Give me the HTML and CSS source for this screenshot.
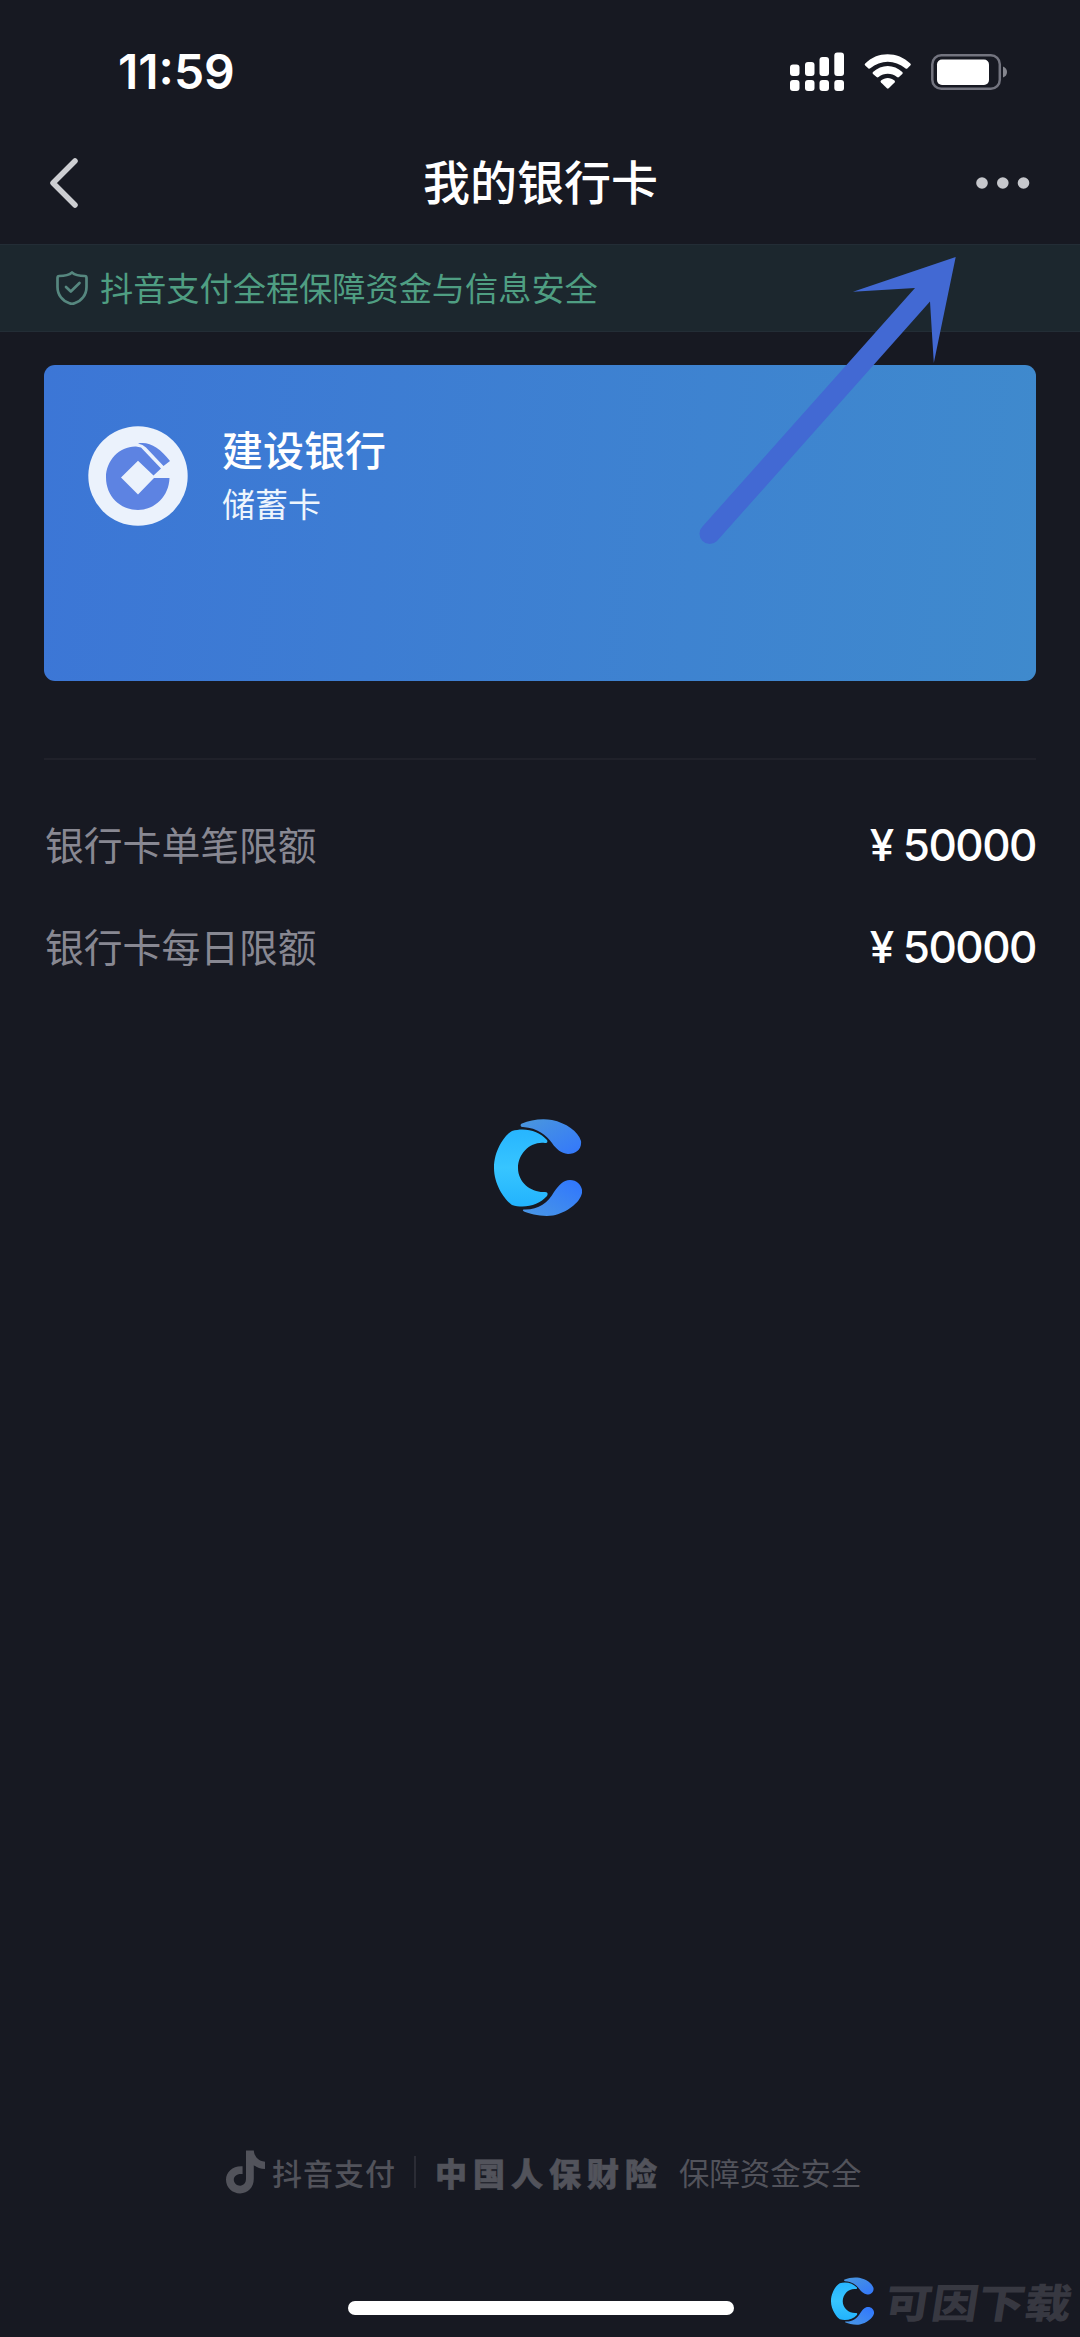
FILE: index.html
```html
<!DOCTYPE html>
<html lang="zh-CN">
<head>
<meta charset="utf-8">
<title>我的银行卡</title>
<link rel="stylesheet" href="styles.css">
</head>
<body>
<svg width="0" height="0" class="defs" aria-hidden="true">
  <defs>
    <linearGradient id="cyan" x1="0" y1="0" x2="0" y2="1"><stop offset="0" stop-color="#27b5ff"/><stop offset=".5" stop-color="#37c5ff"/><stop offset="1" stop-color="#22b3fd"/></linearGradient>
    <linearGradient id="blue-top" x1="0" y1="0" x2="1" y2="1"><stop offset="0" stop-color="#4b98dc"/><stop offset="1" stop-color="#3377fc"/></linearGradient>
    <linearGradient id="blue-bottom" x1="0" y1="1" x2="1" y2="0"><stop offset="0" stop-color="#4a98e4"/><stop offset="1" stop-color="#2f75ff"/></linearGradient>
    <symbol id="brand" viewBox="0 0 88 97">
      <path fill="url(#blue-top)" d="M28 4.500C36 1 48-1 58 1C72 4 84 12 87 22C88 30 82 35 74 35C67 34 62 30 58 24C52 16 44 9 29 8C26 8 26 5 28 4.500Z"/>
      <path fill="url(#blue-bottom)" d="M30 90.500C44 91 54 84 60 73C65 66 69 61 76 61C84 61 89 68 88 74C86 84 72 94 59 96.500C48 98 36 95 30 92.500C28 91.500 29 90.500 30 90.500Z"/>
      <path fill="url(#cyan)" d="M18 12C31 8 45 12 53 21C54 23 53 24 51 24C37 22 24 34 24 49C24 64 38 74 51 73C54 73 54 75 53 77C45 86 31 90 18 86C12 82 0 67 0 49C0 30 12 15 18 12Z"/>
    </symbol>
  </defs>
</svg>
<div class="screen">
  <div class="status">
    <span class="clock">11:59</span>
    <svg class="status-icons" viewBox="0 0 218 40" fill="#fff">
      <rect x="0" y="12.500" width="9.500" height="11.500" rx="3"/><rect x="15" y="10" width="9.500" height="14" rx="3"/><rect x="29.500" y="5" width="9.500" height="19" rx="3"/><rect x="44.300" y=".5" width="9.700" height="23.500" rx="3"/>
      <rect x="0" y="28" width="9.500" height="11" rx="3"/><rect x="15" y="28" width="9.500" height="11" rx="3"/><rect x="29.500" y="28" width="9.500" height="11" rx="3"/><rect x="44.300" y="28" width="9.700" height="11" rx="3"/>
      <path d="M75.200 11.500C87-1 108-1 120.300 11.500Q121.300 12.500 120.300 13.500L117.300 16.500Q116.300 17.200 115.300 16.300C105 7.500 90.500 7.500 80.300 16.300Q79.200 17.200 78.200 16.200L75.200 13.500Q74.200 12.500 75.200 11.500Z"/>
      <path d="M83 20C91.500 12 104 12 112.300 20Q113.300 21 112.300 22L109 25Q108 25.800 107 25C101.500 20.700 94 20.700 88.600 25Q87.500 25.800 86.600 25L83 22Q82 21 83 20Z"/>
      <path d="M91 28.500C95 25 100.500 25 104.500 28.500Q105.500 29.500 104.600 30.500L98.700 36.300Q97.800 37 96.900 36.300L91 30.500Q90 29.500 91 28.500Z"/>
      <rect x="142.300" y="3.200" width="67.500" height="33.600" rx="9" fill="none" stroke="#73747f" stroke-width="2.500"/>
      <rect x="147" y="7.500" width="52" height="25.500" rx="5"/>
      <path d="M213 14.500Q217 16 217 20T213 25.500Z" fill="#85868e"/>
    </svg>
  </div>
  <header class="nav">
    <svg class="back" viewBox="0 0 30 52"><path d="M25 4L3 26L25 48" fill="none" stroke="#cdced2" stroke-width="5.500" stroke-linecap="round" stroke-linejoin="round"/></svg>
    <h1 class="title">我的银行卡</h1>
    <svg class="more" viewBox="0 0 54 12" fill="#c6c7cc"><circle cx="6" cy="6" r="5.800"/><circle cx="26.800" cy="6" r="5.800"/><circle cx="47.500" cy="6" r="5.800"/></svg>
  </header>
  <div class="notice">
    <svg class="shield" viewBox="0 0 32 34" fill="none" stroke="#56877f" stroke-width="2.700" stroke-linecap="round" stroke-linejoin="round"><path d="M16 1.500C12.500 4.500 7 5 3.200 5Q1.500 5 1.500 7V16C1.500 24 6.500 30 13.500 32.300Q16 33.300 18.500 32.300C25.500 30 30.500 24 30.500 16V7Q30.500 5 28.800 5C25 5 19.500 4.500 16 1.500Z"/><path d="M10 16L14.800 20.500L23.500 12"/></svg>
    <span class="notice-text">抖音支付全程保障资金与信息安全</span>
  </div>
  <section class="card">
    <svg class="bank-logo" viewBox="0 0 100 100">
      <circle cx="50" cy="50" r="49.700" fill="#ebf2fc"/>
      <path fill="#5d83e2" d="M18 51.500C18 34 32 20 48 20.500L53 21.500L73 42.500L65.500 49.500L50 34.700L33 51.500L50 68.500L66 52H81.500C81 70 67 84 50 84C32 84 18 70 18 51.500Z"/>
      <path fill="#5d83e2" d="M50 17.500C61 15 72 22 82 35L75.500 40L58 21.500Q55 18.500 50 17.500Z"/>
    </svg>
    <div class="bank">
      <div class="bank-name">建设银行</div>
      <div class="bank-type">储蓄卡</div>
    </div>
  </section>
  <section class="limits">
    <div class="limit"><span class="label">银行卡单笔限额</span><span class="amount"><span class="yen">¥</span>50000</span></div>
    <div class="limit"><span class="label">银行卡每日限额</span><span class="amount"><span class="yen">¥</span>50000</span></div>
  </section>
  <svg class="brand-center"><use href="#brand"/></svg>
  <footer class="footer">
    <svg class="note" viewBox="0 0 40 44"><path fill="#52535b" d="M20.500 0H28.500C29 6 33 11 40 11.500V19C35.500 19 31.500 17.500 28.500 15V29C28.500 38 22.500 44 14.500 44S0 38 0 30S6.500 16 15.500 16H17V24H15C11 24 8 26.500 8 30S11 36 14.500 36S20.500 33.500 20.500 29Z"/></svg>
    <span class="pay">抖音支付</span>
    <span class="bar"></span>
    <span class="insurer">中国人保财险</span>
    <span class="safe">保障资金安全</span>
  </footer>
  <div class="home"></div>
  <div class="watermark">
    <svg class="brand-small"><use href="#brand"/></svg>
    <span class="watermark-text">可因下载</span>
  </div>
  <svg class="arrow" viewBox="699 257 258 288" fill="#4269d3"><path d="M955.700 257L853 291.700L915 288L702.500 526.500A10 10 0 0 0 717 541L930 301.500L933.800 363Z"/></svg>
</div>
</body>
</html>
```
FILE: styles.css
```css
* { box-sizing: border-box; }
body { margin: 0; background: #171922; }
.defs { position: absolute; }
.screen {
  position: relative;
  display: flex;
  flex-direction: column;
  width: 1080px;
  height: 2337px;
  overflow: hidden;
  background: #171922;
  color: #fff;
  font-family: "Noto Sans CJK SC", sans-serif;
}
svg { display: block; flex: none; }
span, h1, .bank-name, .bank-type { white-space: nowrap; }

.status {
  display: flex;
  justify-content: space-between;
  align-items: center;
  height: 144px;
  padding: 0 72px 0 118px;
}
.clock { font: 600 48px/60px Inter, sans-serif; }
.status-icons { width: 218px; height: 40px; }

.nav {
  display: flex;
  justify-content: space-between;
  align-items: center;
  height: 100px;
  padding: 0 50px 22px 50px;
}
.back { width: 30px; height: 52px; }
.title { margin: 0 0 6px 25px; font-size: 47px; font-weight: 500; line-height: 70px; }
.more { width: 54px; height: 12px; }

.notice {
  display: flex;
  align-items: center;
  gap: 12px;
  height: 88px;
  padding-left: 56px;
  border-top: 1px solid #232d36;
  border-bottom: 1px solid #232d36;
  background: #1c272e;
  color: #4f9e82;
  font-size: 33.200px;
  line-height: 50px;
}
.notice-text { padding-bottom: 3px; }
.shield { width: 32px; height: 34px; }

.card {
  display: flex;
  gap: 34px;
  height: 316px;
  margin: 33px 44px 0;
  padding: 61px 44px;
  border-radius: 11px;
  background: linear-gradient(96deg, #3c76d6 0%, #3f8acd 100%);
}
.bank { margin-top: -2px; }
.bank-name { font-size: 41px; font-weight: 500; line-height: 48px; }
.bank-type { margin-top: 8px; font-size: 33px; line-height: 46px; color: #edf5fd; }
.bank-logo { width: 100px; height: 100px; }

.limits {
  display: flex;
  flex-direction: column;
  gap: 42px;
  margin: 77px 44px 0;
  padding-top: 55px;
  border-top: 2px solid #20212a;
}
.limit { display: flex; justify-content: space-between; align-items: center; height: 60px; }
.label { padding: 0 0 4px 1px; font-size: 38.800px; line-height: 60px; color: #888892; }
.amount { display: flex; gap: 10px; font: 500 44px/60px Inter, sans-serif; letter-spacing: -1.500px; }

.brand-center { width: 88px; height: 97px; margin: 142px 0 0 494px; }

.footer {
  display: flex;
  align-items: center;
  height: 44px;
  margin-top: 934px;
  padding-left: 226px;
  color: #52535b;
  line-height: 44px;
}
.note { width: 39px; height: 44px; }
.pay { margin-left: 7px; font-size: 30px; letter-spacing: 1px; font-weight: 500; }
.bar { width: 2px; height: 32px; margin-left: 18px; background: #2b2c35; }
.insurer { margin-left: 19px; font-size: 32px; font-weight: 900; letter-spacing: 6px; -webkit-text-stroke: .6px #52535b; }
.safe { margin-left: 16px; font-size: 30.400px; }

.home { width: 386px; height: 14px; margin: 107px 0 0 348px; border-radius: 7px; background: #fff; }

.watermark {
  position: absolute;
  right: 8px;
  bottom: 6px;
  display: flex;
  align-items: center;
  gap: 12px;
  height: 60px;
}
.brand-small { width: 43px; height: 48px; }
.watermark-text {
  color: #373841;
  font-size: 46.500px;
  font-weight: 900;
  line-height: 60px;
  transform: skewX(-9deg) scaleY(.86);
}
.arrow { position: absolute; left: 699px; top: 257px; width: 258px; height: 288px; }
```
